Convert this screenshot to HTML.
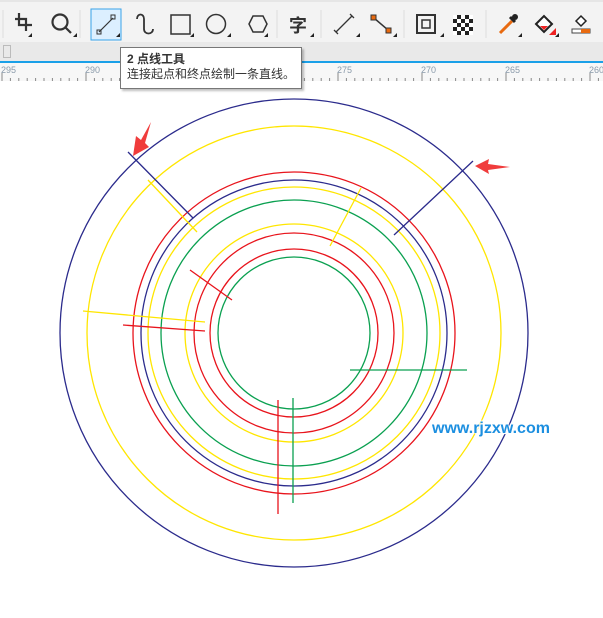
<!DOCTYPE html>
<html><head><meta charset="utf-8"><style>
body{margin:0;width:603px;height:618px;overflow:hidden;background:#fff;font-family:"Liberation Sans","Noto Sans CJK SC",sans-serif;position:relative}
.tb{position:absolute;left:0;top:0;width:603px;height:42px;background:#f3f3f3;border-top:2px solid #e6e6e6;box-sizing:border-box}
.bar{position:absolute;left:0;top:42px;width:603px;height:19px;background:#e9e9e9}
.blue{position:absolute;left:0;top:61px;width:603px;height:2px;background:#1aa0e8}
.ruler{position:absolute;left:0;top:63px;width:603px;height:18px;background:#f7f7f7}
.tip{position:absolute;left:120px;top:47px;width:182px;height:42px;background:#fff;border:1px solid #777;box-shadow:2px 2px 2px rgba(0,0,0,.25);box-sizing:border-box;padding:4px 6px;font-size:12px;line-height:15px;color:#333;white-space:nowrap}
.wm{position:absolute;left:432px;top:420px;font:bold 16px "Liberation Sans",sans-serif;color:#1c8fe0;text-shadow:0 0 2px #fff,0 0 2px #fff,1px 1px 0 #fff,-1px -1px 0 #fff}
</style></head><body>
<div class="tb">
<svg width="603" height="40" style="position:absolute;left:0;top:0">
<g stroke="#333" fill="none" stroke-width="2.2">
<path d="M19 11v12h13M15 17h11v12"/>
<circle cx="60" cy="20" r="7.5"/><path d="M65 25l6 6"/>
<rect x="91" y="7" width="30" height="31" fill="#dcefff" stroke="#39a3ea" stroke-width="1"/>
<path d="M99 30l14-14" stroke-width="1.2"/><rect x="97" y="28" width="4" height="4" stroke-width="1"/><rect x="111" y="13" width="4" height="4" stroke-width="1"/>
<path d="M137 17c0-6 7-6 7 0v10c0 6 9 6 9 0" stroke-width="1.8"/>
<rect x="171" y="13" width="19" height="19" stroke-width="1.5"/>
<circle cx="216" cy="22" r="9.5" stroke-width="1.5"/>
<path d="M249 22l4-8h10l4 8-4 8h-10z" stroke-width="1.5"/>
<path d="M336 30l16-16M334 28l4 4M350 12l4 4" stroke-width="1.3"/>
<path d="M374 16l14 12" stroke-width="1.5"/>
<rect x="417" y="13" width="18" height="18" stroke-width="2"/><rect x="422" y="18" width="8" height="8" stroke-width="1.5"/>
</g>
<text x="289" y="30" font-size="18" font-weight="bold" fill="#333" font-family="Noto Sans CJK SC,sans-serif">字</text>
<rect x="371" y="13" width="5" height="5" fill="#e86a10" stroke="#333"/><rect x="386" y="26" width="5" height="5" fill="#e86a10" stroke="#333"/>
<g fill="#222"><rect x="453" y="13" width="20" height="20"/></g>
<g fill="#fff"><rect x="453" y="13" width="4" height="4"/><rect x="461" y="13" width="4" height="4"/><rect x="469" y="13" width="4" height="4"/><rect x="457" y="17" width="4" height="4"/><rect x="465" y="17" width="4" height="4"/><rect x="453" y="21" width="4" height="4"/><rect x="461" y="21" width="4" height="4"/><rect x="469" y="21" width="4" height="4"/><rect x="457" y="25" width="4" height="4"/><rect x="465" y="25" width="4" height="4"/><rect x="453" y="29" width="4" height="4"/><rect x="461" y="29" width="4" height="4"/><rect x="469" y="29" width="4" height="4"/></g>
<path d="M500 31l12-12" stroke="#e86a10" stroke-width="3"/><path d="M510 15l5 5" stroke="#222" stroke-width="3"/><circle cx="515" cy="15" r="3" fill="#222"/>
<path d="M536 22l8-8 8 8-8 8z" fill="#fff" stroke="#222" stroke-width="2"/><path d="M540 24h8l-4 4z" fill="#e22"/><path d="M549 33l7-7v7z" fill="#e22"/>
<path d="M576 19l5-5 5 5-5 5z" fill="#fff" stroke="#222" stroke-width="1.5"/><rect x="572" y="27" width="18" height="4" fill="#fff" stroke="#444"/><rect x="581" y="27" width="9" height="4" fill="#e86a10"/>
<g fill="#222"><path d="M28 35h4v-4z"/><path d="M73 35h4v-4z"/><path d="M116 35h4v-4z"/><path d="M190 35h4v-4z"/><path d="M227 35h4v-4z"/><path d="M264 35h4v-4z"/><path d="M310 35h4v-4z"/><path d="M356 35h4v-4z"/><path d="M393 35h4v-4z"/><path d="M440 35h4v-4z"/><path d="M518 35h4v-4z"/><path d="M555 35h4v-4z"/></g>
<g stroke="#ddd"><path d="M3 8v28M80 8v28M277 8v28M321 8v28M404 8v28M486 8v28"/></g>
</svg></div>
<div class="bar"><div style="position:absolute;left:3px;top:3px;width:6px;height:11px;border:1px solid #bbb"></div></div>
<div class="blue"></div>
<div class="ruler">
<svg width="603" height="18" style="position:absolute;left:0;top:0">
<g font-size="9" fill="#8a9aaa" font-family="Liberation Sans"><text x="1" y="10">295</text><text x="85" y="10">290</text><text x="337" y="10">275</text><text x="421" y="10">270</text><text x="505" y="10">265</text><text x="589" y="10">260</text></g>
<g stroke="#888" stroke-width="1" id="t"></g>
</svg></div>
<div class="tip"><b>2 点线工具</b><br>连接起点和终点绘制一条直线。</div>
<svg width="603" height="537" style="position:absolute;left:0;top:81px" viewBox="0 81 603 537">
<g fill="none" stroke-width="1.3">
<circle cx="294" cy="333" r="234" stroke="#2b2b8c"/>
<circle cx="294" cy="333" r="207" stroke="#ffe600"/>
<circle cx="294" cy="333" r="161" stroke="#e8141c"/>
<circle cx="294" cy="333" r="153" stroke="#2b2b8c"/>
<circle cx="294" cy="333" r="146" stroke="#ffe600"/>
<circle cx="294" cy="333" r="133" stroke="#0aa050"/>
<circle cx="294" cy="333" r="109" stroke="#ffe600"/>
<circle cx="294" cy="333" r="100" stroke="#e8141c"/>
<circle cx="294" cy="333" r="84" stroke="#e8141c"/>
<circle cx="294" cy="333" r="76" stroke="#0aa050"/>
<path d="M128 152L193 218M473 161L394 235" stroke="#2b2b8c"/>
<path d="M148 180L197 232M361 188L330 246M83 311L205 322" stroke="#ffe600"/>
<path d="M190 270L232 300M123 325L205 331M278 400V514" stroke="#e8141c"/>
<path d="M350 370H467M293 398V503" stroke="#0aa050"/>
</g>
<path d="M133 156L136 136 141 140 151 122 145 143 149 147z" fill="#f03c3c"/>
<path d="M475 166L489 159 488 164 510 167 488 170 489 174z" fill="#f03c3c"/>
</svg>
<div class="wm">www.rjzxw.com</div>
<script>
var g=document.getElementById('t'),s='';
for(var i=0;i<75;i++){var x=2+i*8.4;var h=(i%10==0)?8:3;s+='<line x1="'+x+'" x2="'+x+'" y1="'+(18-h)+'" y2="18"/>';}
g.innerHTML=s;
</script>
</body></html>
